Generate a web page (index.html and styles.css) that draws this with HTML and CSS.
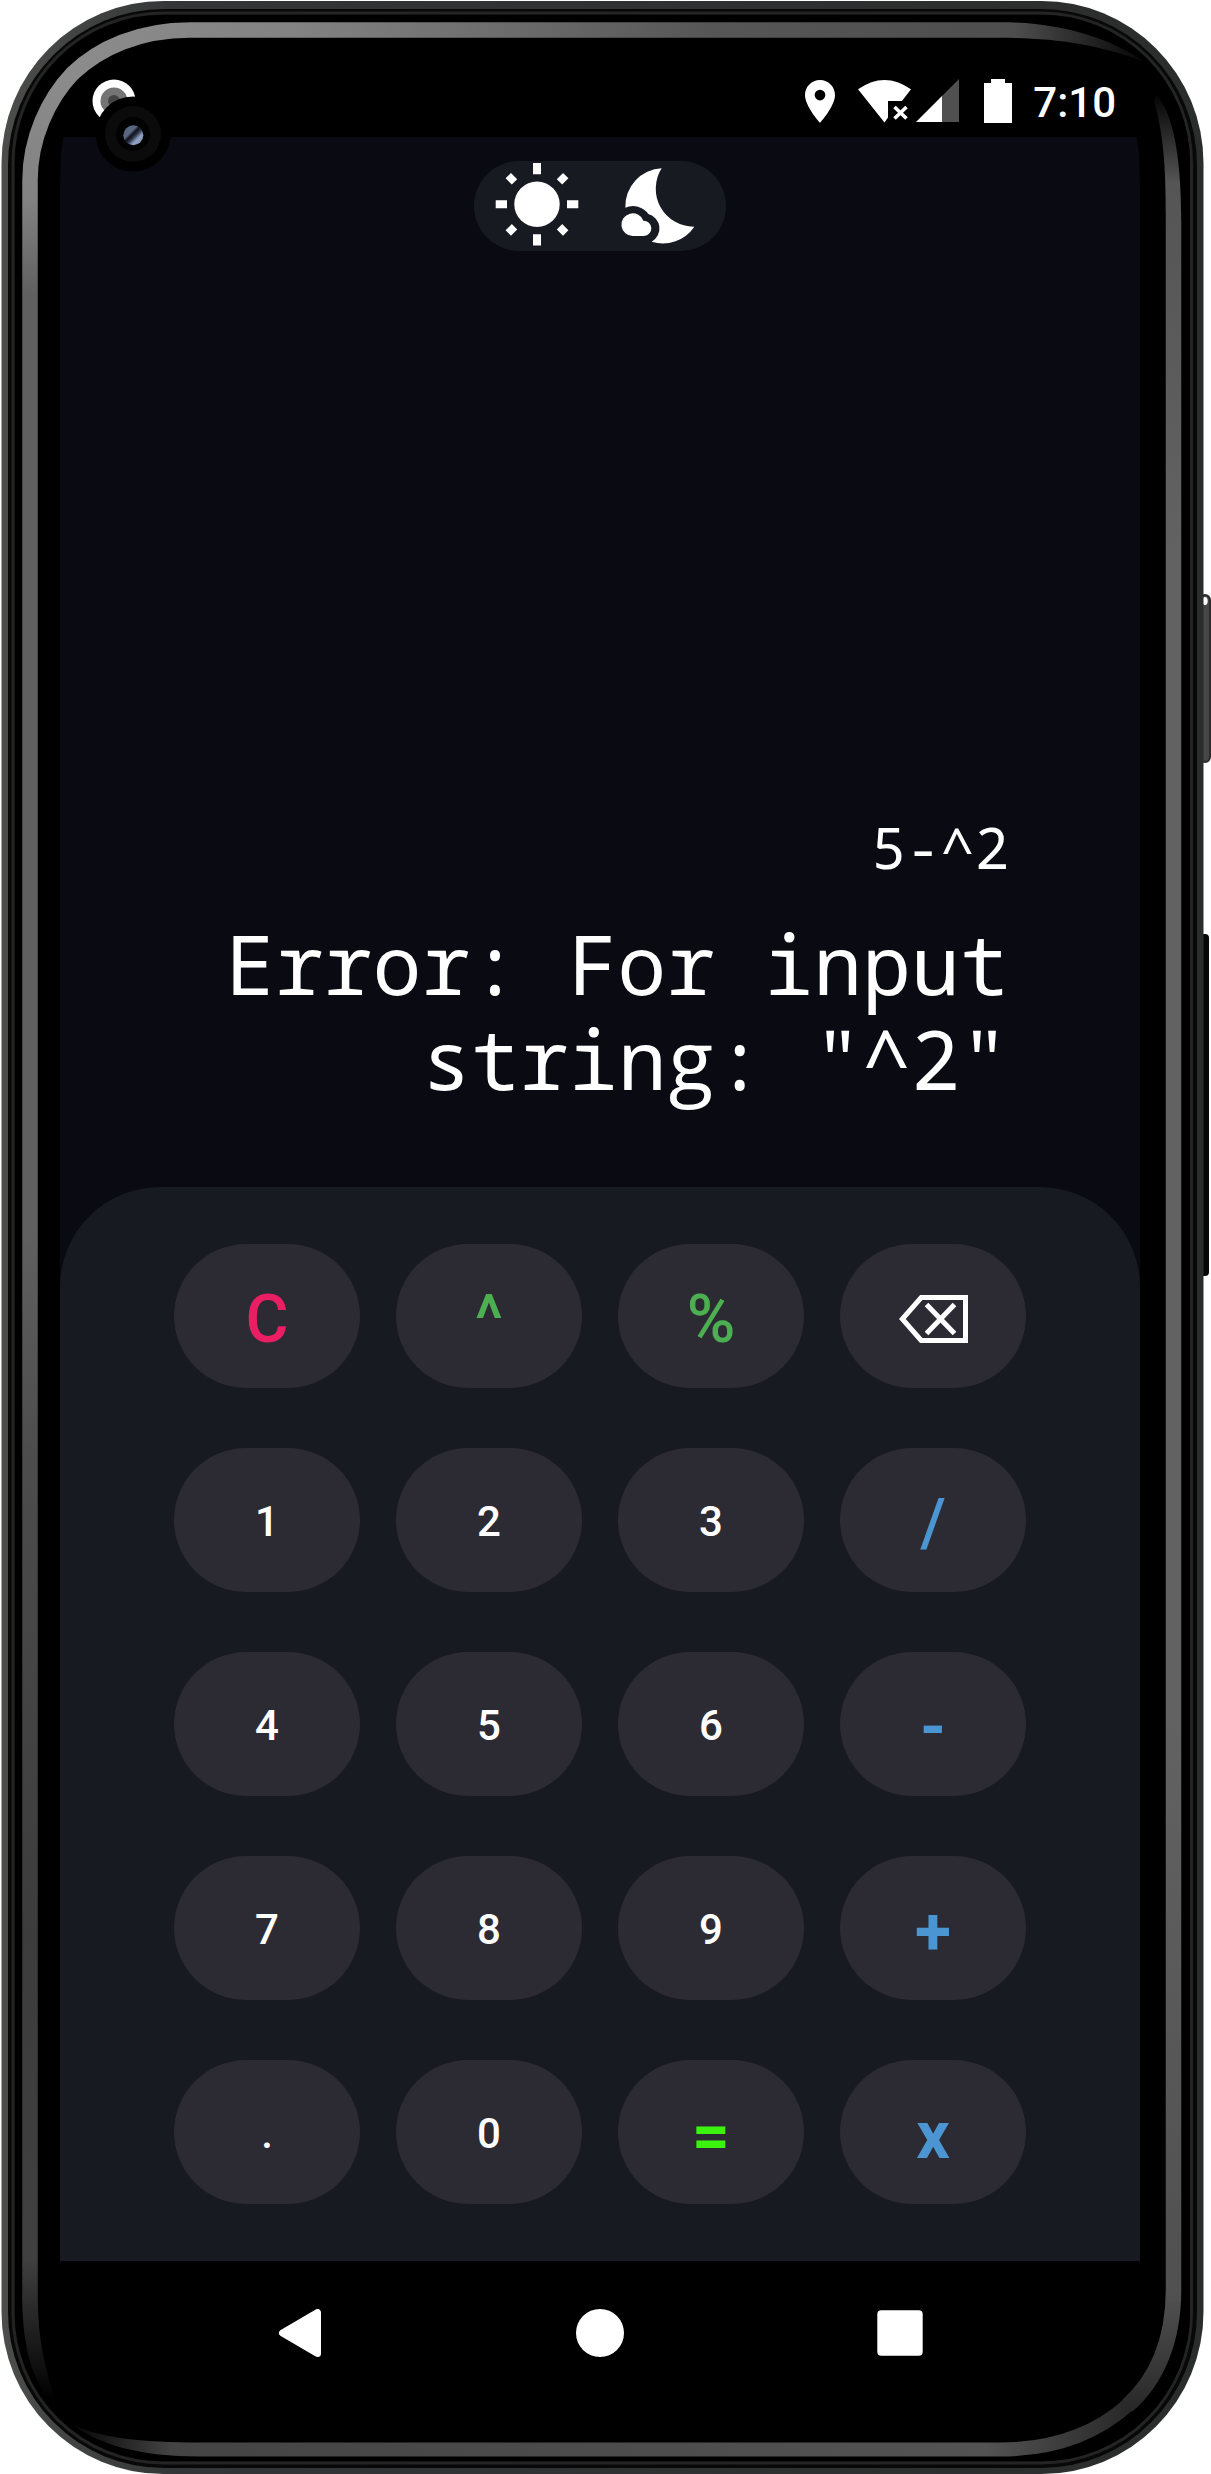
FILE: index.html
```html
<!DOCTYPE html>
<html lang="en">
<head>
<meta charset="utf-8">
<title>Calculator</title>
<link rel="stylesheet" href="styles.css">
</head>
<body>
<main class="phone">
  <svg class="frame" viewBox="0 0 1211 2474" width="1211" height="2474" aria-hidden="true">
    <defs>
      <linearGradient id="rim" gradientUnits="userSpaceOnUse" x1="0" y1="0" x2="1211" y2="0">
        <stop offset="0" stop-color="#4c4e4c"/><stop offset=".15" stop-color="#343536"/><stop offset="1" stop-color="#2b2c2c"/>
      </linearGradient>
      <linearGradient id="left" gradientUnits="userSpaceOnUse" x1="0" y1="60" x2="0" y2="2400">
        <stop offset="0" stop-color="#8c8c8c"/><stop offset=".06" stop-color="#828282"/><stop offset=".1" stop-color="#606060"/>
        <stop offset=".5" stop-color="#606060"/><stop offset=".6" stop-color="#4c4c4c"/><stop offset=".8" stop-color="#3c3c3c"/>
        <stop offset=".94" stop-color="#404040"/><stop offset="1" stop-color="#000"/>
      </linearGradient>
      <linearGradient id="top" gradientUnits="userSpaceOnUse" x1="60" y1="0" x2="1145" y2="0">
        <stop offset="0" stop-color="#8c8c8c"/><stop offset=".22" stop-color="#828282"/><stop offset=".6" stop-color="#565656"/>
        <stop offset=".88" stop-color="#4e4e4e"/><stop offset="1" stop-color="#050505"/>
      </linearGradient>
      <linearGradient id="right" gradientUnits="userSpaceOnUse" x1="0" y1="90" x2="0" y2="2415">
        <stop offset="0" stop-color="#000"/><stop offset=".04" stop-color="#555"/><stop offset=".2" stop-color="#626262"/>
        <stop offset=".7" stop-color="#626262"/><stop offset=".95" stop-color="#505050"/><stop offset="1" stop-color="#262626"/>
      </linearGradient>
      <linearGradient id="bottom" gradientUnits="userSpaceOnUse" x1="65" y1="0" x2="1135" y2="0">
        <stop offset="0" stop-color="#000"/><stop offset=".1" stop-color="#444"/><stop offset=".86" stop-color="#535353"/>
        <stop offset="1" stop-color="#262626"/>
      </linearGradient>
    </defs>
    <rect x="1200" y="595" width="10" height="167" rx="5" fill="#464646" stroke="#2b2b2b" stroke-width="2"/>
    <ellipse cx="1205" cy="601" rx="2.700" ry="4" fill="#fff"/>
    <rect x="1198" y="934" width="11" height="342" rx="4" fill="#070707"/>
    <rect x="1.5" y="1" width="1202" height="2473" rx="162" fill="url(#rim)"/>
    <rect x="8" y="9" width="1189" height="2459" rx="156" fill="#080808"/>
    <rect x="13" y="13" width="1178.5" height="2450" rx="150" fill="none" stroke="#252424" stroke-width="3"/>
    <rect x="15" y="15" width="1175" height="2446" rx="148" fill="#000"/>
    <g fill="none" stroke-width="15.5">
      <path d="M30 2300V180C30 139 48 99 73 73" stroke="url(#left)"/>
      <path d="M72 74C99 48 139 30 190 30H1000" stroke="url(#top)"/>
      <path d="M1173.500 220V2290C1173.500 2340 1157 2380 1127 2406" stroke="url(#right)"/>
      <path d="M1128 2405C1100 2430 1060 2449.500 1000 2449.500H200" stroke="url(#bottom)" stroke-width="14"/>
    </g>
    <path d="M1000 22.200C1060 22.200 1110 38 1145 62C1095 43 1050 37.800 1000 37.800Z" fill="url(#top)"/>
    <path d="M1181.200 220C1181 150 1172 115 1158 96C1153 95 1154 102 1157 112C1164 143 1165.800 170 1165.800 220Z" fill="url(#right)"/>
    <path d="M22.200 2300C23 2355 35 2388 58 2408C45 2370 38 2340 37.800 2300Z" fill="url(#left)"/>
    <path d="M200 2442.500C140 2442.500 100 2438 71 2424C100 2445 140 2456.500 200 2456.500Z" fill="url(#bottom)"/>
  </svg>

  <div class="screen">
    <header class="status">
      <svg class="record" viewBox="0 0 44 44" width="44" height="44"><circle cx="22" cy="22" r="21.5" fill="#fff"/><circle cx="22" cy="22" r="13.5" fill="#747474"/><circle cx="22" cy="22" r="6" fill="#444"/></svg>
      <svg class="pin" viewBox="5 2 14 20" width="30" height="43"><path fill="#fff" d="M12 2C8.13 2 5 5.13 5 9c0 5.25 7 13 7 13s7-7.75 7-13c0-3.87-3.13-7-7-7zm0 9.5a2.5 2.5 0 0 1 0-5 2.5 2.5 0 0 1 0 5z"/></svg>
      <svg class="wifi" viewBox="857 79 53 44" width="53" height="44"><path fill="#fff" d="M857 89.300Q883.500 70.500 910 89.300L901 101H887V117.500L883.500 122.500Z"/><path d="M893.500 107L905.500 118.500M905.500 107L893.500 118.500" stroke="#fff" stroke-width="3.600"/></svg>
      <svg class="signal" viewBox="915 79 43 44" width="43" height="44"><path fill="#505050" d="M958 79V122H941V96Z"/><path fill="#fff" d="M941 96V122H915Z"/></svg>
      <svg class="battery" viewBox="983 79 28 44" width="28" height="44"><path fill="#fff" d="M990 79h14v4h7v40h-28v-40h7z"/></svg>
      <time class="clock">7:10</time>
    </header>

    <section class="app">
      <div class="themes">
        <svg viewBox="474 161 252 90" width="252" height="90" fill="#fff">
          <circle cx="537" cy="204.300" r="22.700"/>
          <path d="M533 163h8v11.300h-8zM533 234.300h8v11.300h-8zM495.700 200.300h11.300v8h-11.300zM567 200.300h11.300v8h-11.300z"/>
          <path transform="rotate(45 537 204.300)" d="M533.200 163.700h7.600v8.800h-7.600zM533.200 236.100h7.600v8.800h-7.600zM496.400 200.500h8.800v7.600h-8.800zM568.800 200.500h8.800v7.600h-8.800z"/>
          <g transform="translate(460 140) scale(.33333)">
            <path d="M605 85A114 114 0 0 0 496 203A56 56 0 0 1 565 222A45 45 0 0 1 575 305A114 114 0 0 0 703 260A114 114 0 0 1 605 85Z"/>
            <path d="M519 288A34 34 0 1 1 550 242A23 23 0 0 1 552 288Z"/>
          </g>
        </svg>
      </div>
      <div class="display">
        <div class="expression">5-^2</div>
        <div class="result">Error: For input<br>strin<span class="g">g</span>: "^2"</div>
      </div>
      <div class="keypad">
        <button class="key op clear">C</button><button class="key op func">^</button><button class="key op func">%</button>
        <button class="key" aria-label="Backspace"><svg class="erase" viewBox="899 1295 69 48" width="69" height="48" fill="none" stroke="#fff" stroke-width="5"><path d="M921.200 1297.500H965.500V1340.500H921.200L902.300 1319Z"/><path d="M926.500 1304.500L954.500 1333.500M954.500 1304.500L926.500 1333.500"/></svg></button>
        <button class="key">1</button><button class="key">2</button><button class="key">3</button><button class="key op math">/</button>
        <button class="key">4</button><button class="key">5</button><button class="key">6</button><button class="key op math bold">-</button>
        <button class="key">7</button><button class="key">8</button><button class="key">9</button><button class="key op math bold">+</button>
        <button class="key">.</button><button class="key">0</button><button class="key op equals bold">=</button><button class="key op math bold">x</button>
      </div>
    </section>

    <nav class="nav">
      <svg viewBox="276 2309 48 48" width="48" height="48"><path fill="#fff" stroke="#fff" stroke-width="7" stroke-linejoin="round" d="M317.500 2312.500V2353.500L282.500 2333Z"/></svg>
      <svg viewBox="0 0 48 48" width="48" height="48"><circle cx="24" cy="24" r="24" fill="#fff"/></svg>
      <svg viewBox="0 0 48 48" width="48" height="48"><rect x="1.300" y="1.200" width="45.400" height="45.600" rx="4" fill="#fff"/></svg>
    </nav>
  </div>

  <svg class="camera" viewBox="0 0 76 76" width="76" height="76" aria-hidden="true">
    <defs><linearGradient id="lens" x1="0" y1="0" x2="1" y2="1"><stop offset="0" stop-color="#4c5a78"/><stop offset=".35" stop-color="#5d6a86"/><stop offset=".45" stop-color="#10131c"/><stop offset=".55" stop-color="#2a3144"/><stop offset=".7" stop-color="#8fa1c4"/><stop offset="1" stop-color="#7c8aa8"/></linearGradient></defs>
    <circle cx="38" cy="38" r="37.500"/><circle cx="38" cy="38" r="28" fill="#0b0b0b"/><circle cx="38" cy="38" r="17" fill="#020202"/>
    <circle cx="38.300" cy="39.300" r="10" fill="url(#lens)"/>
  </svg>
</main>
</body>
</html>
```
FILE: styles.css
```css
* { box-sizing: border-box; }

body {
  margin: 0;
  background: #fff;
  font-family: Roboto, "Liberation Sans", sans-serif;
}

svg { display: block; flex: none; }

.phone {
  position: relative;
  display: grid;
  width: 1211px;
  height: 2474px;
  overflow: hidden;
}

.frame,
.screen { grid-area: 1 / 1; }

.screen {
  width: 1080px;
  margin-left: 60px;
  padding-top: 57px;
  color: #fff;
}

.status {
  display: flex;
  align-items: center;
  height: 80px;
  padding: 8px 24px 0 32px;
}

.pin { margin-left: auto; }
.wifi { margin-left: 23px; }
.signal { margin-left: 5px; }
.battery { margin-left: 25px; }

.clock {
  margin-left: 21px;
  padding-top: 3px;
  font-size: 42px;
  font-weight: 500;
  line-height: 48px;
}

.app {
  display: flex;
  flex-direction: column;
  height: 2124px;
  padding-top: 24px;
  background: #090a12;
  border-radius: 4px 4px 0 0 / 55px 55px 0 0;
}

.themes {
  align-self: center;
  border-radius: 45px;
  background: #181a22;
}

.display {
  flex: 1;
  display: flex;
  flex-direction: column;
  justify-content: flex-end;
  gap: 31px;
  padding: 0 131px 81px 0;
  text-align: right;
  font-family: "Noto Sans Mono", "DejaVu Sans Mono", monospace;
}

.expression {
  font-size: 57.2px;
  line-height: 76px;
}

.result {
  font-size: 81.6px;
  line-height: 95px;
}

/* double-storey g, padded out to the monospace cell */
.g {
  padding: 0 .026em;
  font-family: "Open Sans", sans-serif;
  line-height: 0;
}

.keypad {
  display: grid;
  grid-template-columns: repeat(4, 186px);
  grid-auto-rows: 144px;
  gap: 60px 36px;
  height: 1074px;
  padding: 57px 114px;
  border-radius: 100px 100px 0 0;
  background: #181a22;
}

.key {
  display: flex;
  align-items: center;
  justify-content: center;
  padding: 4px 0 0;
  border: 0;
  border-radius: 72px;
  background: #2c2b34;
  color: #fff;
  font: 500 42px/48px Roboto, "Liberation Sans", sans-serif;
}

.op {
  padding-top: 7px;
  font-size: 66px;
  line-height: 78px;
}

.bold { font-weight: 700; }
.clear { color: #e91e63; }
.func { color: #4caf50; }
.math { color: #4b96d2; }
.equals { color: #3cf30f; }

.erase { margin-top: 2px; }

.nav {
  display: flex;
  align-items: center;
  justify-content: space-between;
  height: 144px;
  padding: 0 216px;
}

/* camera cut-out lies over the status bar and the app */
.camera {
  position: absolute;
  left: 95px;
  top: 96px;
}
```
